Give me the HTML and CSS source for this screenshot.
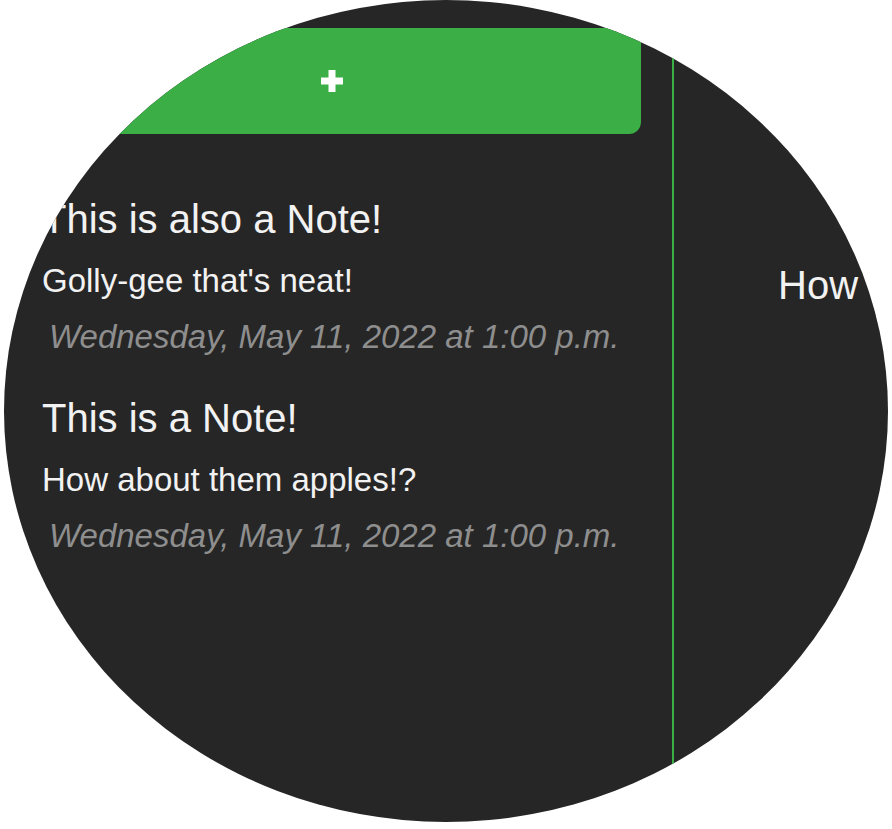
FILE: index.html
```html
<!DOCTYPE html>
<html lang="en">
<head>
<meta charset="utf-8">
<title>Notes</title>
<link rel="stylesheet" href="styles.css">
</head>
<body>
<div class="frame">
  <div class="app">
    <aside class="sidebar">
      <button class="add" type="button" aria-label="Add note">
        <svg class="add-icon" width="22" height="22" viewBox="0 0 22 22" aria-hidden="true">
          <rect x="7.5" y="0" width="7" height="22" fill="#ffffff"/>
          <rect x="0" y="7.5" width="22" height="7" fill="#ffffff"/>
        </svg>
      </button>
      <ul class="notes">
        <li class="note">
          <h2 class="note-title">This is also a Note!</h2>
          <p class="note-body">Golly-gee that's neat!</p>
          <p class="note-date">Wednesday, May 11, 2022 at 1:00 p.m.</p>
        </li>
        <li class="note">
          <h2 class="note-title">This is a Note!</h2>
          <p class="note-body">How about them apples!?</p>
          <p class="note-date">Wednesday, May 11, 2022 at 1:00 p.m.</p>
        </li>
      </ul>
    </aside>
    <main class="editor">
      <p class="editor-text">How about them apples!?</p>
    </main>
  </div>
</div>
</body>
</html>
```
FILE: styles.css
```css
html, body {
  margin: 0;
  padding: 0;
  background: #ffffff;
}

body {
  width: 892px;
  height: 829px;
  overflow: hidden;
  font-family: "Liberation Sans", Arial, sans-serif;
}

.frame {
  width: 884px;
  height: 822px;
  margin-left: 4px;
  border-radius: 50%;
  overflow: hidden;
  background: #262626;
}

.app {
  display: flex;
  height: 100%;
}

.sidebar {
  flex: none;
  box-sizing: border-box;
  width: 670px;
  border-right: 2px solid #3bae46;
  padding: 28px 31px 0 18px;
}

.add {
  display: flex;
  align-items: center;
  justify-content: center;
  width: 619px;
  height: 106px;
  border: none;
  border-radius: 12px;
  background: #3bae46;
  padding: 0;
  margin: 0;
}

.add-icon {
  display: block;
}

.notes {
  list-style: none;
  margin: 63px 0 0;
  padding: 0 0 0 20px;
  display: flex;
  flex-direction: column;
  gap: 39px;
}

.note {
  display: flex;
  flex-direction: column;
  color: #f2f2f2;
  white-space: nowrap;
}

.note-title {
  margin: 0 0 20px;
  font-size: 40px;
  line-height: 44px;
  font-weight: normal;
}

.note-body {
  margin: 0 0 16px;
  font-size: 33px;
  line-height: 40px;
}

.note-date {
  margin: 0;
  padding-left: 7px;
  font-size: 33px;
  line-height: 40px;
  font-style: italic;
  color: #8e8e8e;
}

.editor {
  flex: 1;
  min-width: 0;
  padding: 263px 0 0 104px;
}

.editor-text {
  margin: 0;
  font-size: 40px;
  line-height: 44px;
  color: #f2f2f2;
  white-space: nowrap;
}
```
